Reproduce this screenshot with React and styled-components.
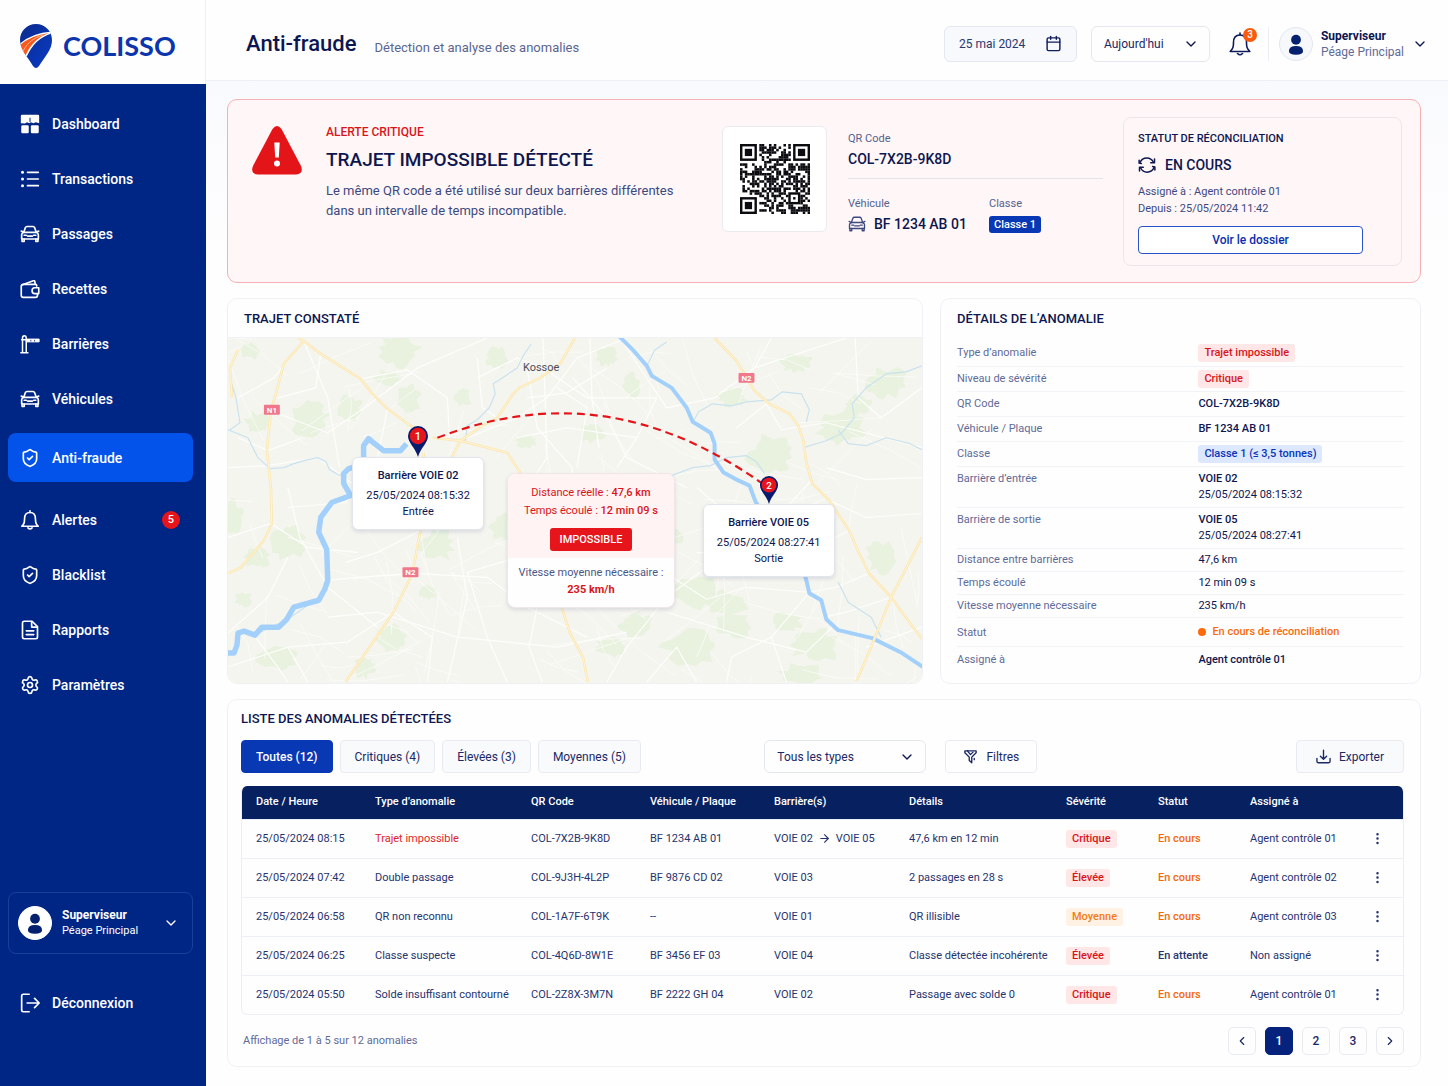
import React, { useState } from "react";
import styled, { createGlobalStyle } from "styled-components";
import {
  ArrowRight,
  Calendar,
  ChevronDown,
  ChevronLeft,
  ChevronRight,
  EllipsisVertical,
  Settings,
  ShieldCheck,
} from "lucide-react";

const GlobalStyle = createGlobalStyle`
  * {
    box-sizing: border-box;
  }
  body {
    margin: 0;
    color: #0d1650;
    background: #fefefe;
    font-family: Roboto, "Liberation Sans", sans-serif;
    font-size: 11px;
    line-height: 16px;
  }
  button, select {
    font-family: inherit;
    color: inherit;
    cursor: pointer;
  }
  h1, h2, h3, p, dl, dd, dt {
    margin: 0;
  }
`;

/* ---------- icons ---------- */

const Svg = ({ size = 20, width = 2, children }) => (
  <svg
    width={size}
    height={size}
    viewBox="0 0 24 24"
    fill="none"
    stroke="currentColor"
    strokeWidth={width}
    strokeLinecap="round"
    strokeLinejoin="round"
    aria-hidden="true"
  >
    {children}
  </svg>
);

const DashboardIcon = () => (
  <Svg>
    <g fill="currentColor" stroke="none">
      <path d="M2.500 1h19Q23 1 23 2.500V11l-4-1-3 1.200-3-1.200-2 1-2.500-1L6 11.500 1 11V2.500Q1 1 2.500 1Z" />
      <rect x="1.500" y="13.500" width="9" height="9.500" rx="1.500" />
      <rect x="13" y="13.500" width="9.500" height="9.500" rx="1.500" />
    </g>
    <path d="M12 5v4" stroke="#002685" strokeWidth="1.200" />
  </Svg>
);

const ListIcon = () => (
  <Svg>
    <path d="M9 4h13M9 12h13M9 20h13" />
    <g fill="currentColor" stroke="none">
      <circle cx="3" cy="4" r="1.800" />
      <circle cx="3" cy="12" r="1.800" />
      <circle cx="3" cy="20" r="1.800" />
    </g>
  </Svg>
);

const CarIcon = ({ size, width }) => (
  <Svg size={size} width={width}>
    <path d="M4.500 10 6.500 4.200Q7 3 8.300 3h7.400q1.300 0 1.800 1.200L19.500 10" />
    <path d="M1.500 8.500 4.500 10h15l3-1.500" />
    <path d="M4.500 10Q2 11 2 13v5h20v-5q0-2-2.500-3" />
    <path d="M2.500 18v3h2.500v-3M19 18v3h2.500v-3" />
    <path d="M5 13.500h2.500M16.500 13.500H19M9 14.500h6" />
  </Svg>
);

const WalletIcon = () => (
  <Svg>
    <path d="M20 8.500V7.500Q20 6.500 18.500 6.500H4q-2.500 0-2.500 2.500v10.500Q1.500 22 4 22h14.500q2.500 0 2.500-2.500V18" />
    <path d="M3 6.800 16 2.200q1.500-.5 1.800 1l.5 3" />
    <path d="M22.500 10.500h-5q-3 0-3 3.500t3 3.500h5Z" />
  </Svg>
);

const BarrierIcon = () => (
  <Svg width={1.8}>
    <path d="M3 22V5q0-3 2.200-3T7.500 5v17M1 22.500h8.500" />
    <path d="M2 7h6" />
    <path d="M8 6h15v3.500H8Z" fill="currentColor" strokeWidth="1" />
    <path d="M13 8.500v-1M17.500 8.500v-1" stroke="#002685" strokeWidth="1" />
  </Svg>
);

const BellIcon = ({ size, width }) => (
  <Svg size={size} width={width}>
    <path d="M12 1v2" />
    <path d="M12 3q6.500 0 6.500 7.500 0 5 1.500 6.800l1.800 2.200H2.200L4 17.300q1.500-1.800 1.500-6.800Q5.500 3 12 3Z" />
    <path d="M9.500 21.500q2.500 2.500 5 0" />
  </Svg>
);

const ReportIcon = () => (
  <Svg>
    <path d="M5 1.500h9.500L21 8v12.500q0 2-2 2H5q-2 0-2-2v-17q0-2 2-2Z" />
    <path d="M14 2v6.500h6.500M7.500 13h9M7.500 17.500h9" />
  </Svg>
);

const LogoutIcon = () => (
  <Svg>
    <path d="M11 1.500H4q-2 0-2 2v17q0 2 2 2h7" />
    <path d="M8.500 12H23M17.500 6.500 23 12l-5.500 5.500" />
  </Svg>
);

const SyncIcon = () => (
  <Svg size={18} width={2}>
    <path d="M2.500 9Q5 2.500 12 2.500q5.500 0 8.500 5.500" />
    <path d="M21.500 15Q19 21.500 12 21.500q-5.500 0-8.500-5.500" />
    <path d="M22 4v5h-5M2 20v-5h5" />
    <path d="M1.500 5.500v4l3 .5M22.500 18.500v-4l-3-.5" />
  </Svg>
);

const FunnelIcon = () => (
  <Svg size={15} width={2.2}>
    <path d="M3 3h18v3l-7 7v9l-4-3.500V13L3 6Z" />
    <path d="m7 3 5 6 4-4M18 15v2" />
  </Svg>
);

const ExportIcon = () => (
  <Svg size={15} width={2.2}>
    <path d="M1.500 15v4.500q0 2.500 2.500 2.500h16q2.500 0 2.500-2.500V15" />
    <path d="M12 2v14M7 11.500l5 5 5-5" />
  </Svg>
);

const PersonIcon = ({ size = 34 }) => (
  <svg width={size} height={size} viewBox="0 0 34 34" fill="currentColor" aria-hidden="true">
    <circle cx="17" cy="12.500" r="5.200" />
    <path d="M9.500 24.500q0-5.500 7.500-5.500t7.500 5.500q0 4-7.500 4t-7.500-4Z" />
  </svg>
);

const WarningIcon = () => (
  <svg width="50" height="49" viewBox="0 0 50 49" aria-hidden="true">
    <path
      d="M20.500 3Q25-3 29.500 3L49 40q3 8-5 8.500H6q-8-.5-5-8.500Z"
      fill="#e31519"
    />
    <path d="M22.300 16.500h5.400l-.9 15h-3.600Z" fill="#fff" />
    <circle cx="25" cy="37.500" r="3" fill="#fff" />
  </svg>
);

const LogoMark = () => (
  <svg width="32" height="45" viewBox="0 0 32 45" aria-hidden="true">
    <defs>
      <linearGradient id="pin" x1="0" y1="0" x2="1" y2="1">
        <stop offset="0" stopColor="#0a2a8c" />
        <stop offset="1" stopColor="#0a3cc8" />
      </linearGradient>
      <clipPath id="pinShape">
        <path d="M16 0C25 0 32 7 32 16c0 10-7 16-13 26q-3 4-6 0C8 33 0 26 0 16 0 7 7 0 16 0Z" />
      </clipPath>
    </defs>
    <g clipPath="url(#pinShape)">
      <rect width="32" height="45" fill="url(#pin)" />
      <path d="M-1 20.500Q11 9 32 7.500v2Q15 14 6.500 33L-1 26Z" fill="#fff" />
      <path d="M-1 22Q10 11.500 29 9 13 14.500 5.500 31.500L-1 26Z" fill="#fb5a1c" />
      <path d="M3 27Q9 15 23 11" stroke="#ffd9c8" strokeWidth=".7" fill="none" />
    </g>
  </svg>
);

/* ---------- shell ---------- */

const Shell = styled.div`
  display: flex;
  min-height: 100vh;
`;

const Sidebar = styled.aside`
  display: flex;
  flex-direction: column;
  flex: 0 0 206px;
  padding-bottom: 60px;
  color: #fff;
  background: #002685;
`;

const Logo = styled.a`
  display: flex;
  align-items: center;
  gap: 11px;
  height: 84px;
  padding: 8px 0 0 20px;
  background: #fefefe;
  border-right: 1px solid #eef0f4;
  color: #0c35ad;
  font-family: Lato, "Liberation Sans", sans-serif;
  font-size: 27px;
  font-weight: 700;
  line-height: 32px;
  text-decoration: none;
`;

const Nav = styled.nav`
  display: flex;
  flex-direction: column;
  gap: 6px;
  padding: 15px 13px 0 8px;
`;

const NavLink = styled.a`
  display: flex;
  align-items: center;
  gap: 12px;
  height: 49px;
  padding: 0 13px 0 12px;
  margin: ${(p) => (p.$active ? "4px 0 7px" : "0")};
  border-radius: 8px;
  background: ${(p) => (p.$active ? "#0353ea" : "transparent")};
  color: #fff;
  font-size: 14px;
  font-weight: 500;
  text-decoration: none;
`;

const NavBadge = styled.span`
  width: 18px;
  height: 18px;
  margin-left: auto;
  border-radius: 50%;
  background: #e6151b;
  font-size: 11px;
  line-height: 18px;
  text-align: center;
`;

const SidebarFoot = styled.div`
  display: flex;
  flex-direction: column;
  gap: 24px;
  margin-top: auto;
  padding: 24px 13px 0 8px;
`;

const ProfileButton = styled.button`
  display: flex;
  align-items: center;
  gap: 10px;
  height: 62px;
  padding: 0 13px 0 9px;
  border: 1px solid #1a409a;
  border-radius: 8px;
  background: transparent;
  color: #fff;
  text-align: left;
  svg:last-child {
    margin-left: auto;
  }
`;

const Avatar = styled.span`
  display: flex;
  flex-shrink: 0;
  align-items: center;
  justify-content: center;
  width: 34px;
  height: 34px;
  border: 1px solid ${(p) => (p.$light ? "#e3e7f0" : "#fff")};
  border-radius: 50%;
  background: ${(p) => (p.$light ? "#f6f8fc" : "#fff")};
  color: #05206f;
`;

const UserText = styled.span`
  display: flex;
  flex-direction: column;
  font-size: ${(p) => (p.$large ? "12px" : "11px")};
  line-height: 16px;
  color: ${(p) => (p.$large ? "#5f6b99" : "#fff")};
  strong {
    color: ${(p) => (p.$large ? "#0d1650" : "#fff")};
    font-size: 12px;
    font-weight: 700;
  }
`;

const Page = styled.div`
  display: flex;
  flex: 1;
  flex-direction: column;
  min-width: 0;
`;

const Header = styled.header`
  display: flex;
  align-items: center;
  height: 81px;
  padding: 7px 20px 0 40px;
  border-bottom: 1px solid #eceff5;
`;

const PageTitle = styled.h1`
  font-size: 22px;
  font-weight: 500;
  line-height: 28px;
`;

const PageSubtitle = styled.p`
  margin-left: 18px;
  padding-top: 8px;
  color: #5a668f;
  font-size: 13px;
`;

const HeaderTools = styled.div`
  display: flex;
  align-items: center;
  gap: 14px;
  margin-left: auto;
`;

const DateButton = styled.button`
  display: flex;
  align-items: center;
  justify-content: space-between;
  width: 133px;
  height: 36px;
  padding: 0 14px;
  border: 1px solid #e3e7f0;
  border-radius: 6px;
  background: #f7f9fc;
  color: #2b3770;
  font-size: 12px;
  svg {
    color: #101c5c;
  }
`;

const SelectBox = styled.div`
  position: relative;
  width: ${(p) => p.$width};
  svg {
    position: absolute;
    top: 50%;
    right: 11px;
    transform: translateY(-50%);
    pointer-events: none;
  }
`;

const Select = styled.select`
  width: 100%;
  height: ${(p) => p.$height};
  padding: 0 12px;
  border: 1px solid #e3e7f0;
  border-radius: 6px;
  background: #fefefe;
  color: #1c2865;
  font-size: 12px;
  appearance: none;
`;

const BellButton = styled.button`
  position: relative;
  display: flex;
  margin: 0 2px 0 4px;
  padding: 0;
  border: 0;
  background: none;
  color: #101c5c;
`;

const BellBadge = styled.span`
  position: absolute;
  top: -4px;
  right: -5px;
  width: 14px;
  height: 14px;
  border-radius: 50%;
  background: #fb5a0c;
  color: #fff;
  font-size: 10px;
  font-weight: 500;
  line-height: 14px;
  text-align: center;
`;

const UserButton = styled.button`
  display: flex;
  align-items: center;
  gap: 8px;
  padding: 0 0 0 10px;
  border: 0;
  border-left: 1px solid #eceff5;
  background: none;
  text-align: left;
`;

const Main = styled.main`
  display: flex;
  flex: 1;
  flex-direction: column;
  gap: 15px;
  padding: 18px 27px 20px 21px;
  background: linear-gradient(#f9fafd, #fefefe 200px);
`;

/* ---------- alert ---------- */

const Alert = styled.section`
  display: flex;
  padding: 17px 18px 16px 24px;
  border: 1px solid #f5b0b2;
  border-radius: 10px;
  background: #fff7f7;
`;

const AlertIcon = styled.div`
  width: 50px;
  margin: 9px 24px 0 0;
`;

const AlertText = styled.div`
  flex: 1;
  padding: 7px 20px 0 0;
  color: #3c4981;
  font-size: 13px;
  line-height: 20px;
  p {
    max-width: 370px;
  }
`;

const AlertTag = styled.div`
  color: #d8151b;
  font-size: 12px;
  font-weight: 500;
  line-height: 16px;
`;

const AlertTitle = styled.h2`
  margin: 8px 0 9px;
  color: #0d1650;
  font-size: 19px;
  font-weight: 500;
  line-height: 24px;
`;

const QrBox = styled.div`
  display: flex;
  align-items: center;
  justify-content: center;
  width: 105px;
  height: 106px;
  margin: 9px 21px 0 0;
  border: 1px solid #ebebef;
  border-radius: 6px;
  background: #fff;
`;

const AlertInfo = styled.div`
  width: 255px;
  margin-right: 20px;
  padding-top: 14px;
`;

const InfoPair = styled.div`
  display: grid;
  grid-template-columns: 141px 1fr;
  padding-top: 17px;
`;

const InfoLabel = styled.div`
  margin-bottom: 3px;
  color: #55618f;
  font-size: 11px;
`;

const InfoValue = styled.div`
  display: flex;
  align-items: center;
  gap: 8px;
  height: 18px;
  font-size: 14px;
  font-weight: 500;
  svg {
    color: #3c4981;
  }
`;

const InfoTop = styled.div`
  padding-bottom: 10px;
  border-bottom: 1px solid #e5e3ea;
`;

const ClassTag = styled.span`
  padding: 0 5px;
  border-radius: 3px;
  background: #0838b4;
  color: #fff;
  font-size: 11px;
  line-height: 17px;
`;

const StatusBox = styled.div`
  width: 279px;
  padding: 13px 38px 11px 14px;
  border: 1px solid #ece6ec;
  border-radius: 8px;
  color: #3c4981;
  line-height: 17px;
`;

const StatusTitle = styled.h3`
  color: #0d1650;
  font-size: 11px;
  font-weight: 500;
  line-height: 16px;
`;

const StatusLine = styled.div`
  display: flex;
  align-items: center;
  gap: 9px;
  margin: 8px 0;
  color: #0d1650;
  font-size: 14px;
  font-weight: 500;
  line-height: 20px;
`;

const OutlineButton = styled.button`
  width: 100%;
  height: 28px;
  margin-top: 9px;
  border: 1px solid #2b50c8;
  border-radius: 4px;
  background: #fff;
  color: #0a2fae;
  font-size: 12px;
  font-weight: 500;
`;

/* ---------- cards ---------- */

const Columns = styled.div`
  display: grid;
  grid-template-columns: minmax(0, 696fr) minmax(0, 481fr);
  gap: 17px;
`;

const Card = styled.section`
  display: flex;
  flex-direction: column;
  overflow: hidden;
  border: 1px solid #eff1f6;
  border-radius: 10px;
  background: #fefefe;
`;

const CardTitle = styled.h2`
  padding: ${(p) => p.$pad || "12px 16px 10px"};
  font-size: 13px;
  font-weight: 500;
  line-height: 16px;
`;

const MapArea = styled.div`
  position: relative;
  aspect-ratio: 694 / 342;
  border-top: 1px solid #eff1f6;
  > svg {
    display: block;
    width: 100%;
    height: 100%;
  }
`;

const Marker = styled.div`
  position: absolute;
  top: ${(p) => p.$y}%;
  left: ${(p) => p.$x}%;
  display: flex;
  flex-direction: column;
  align-items: center;
  transform: translateX(-50%);
`;

const Bubble = styled.div`
  width: 132px;
  padding: 10px 0 9px;
  border: 1px solid #e2e5ee;
  border-radius: 6px;
  background: #fff;
  box-shadow: 0 2px 4px rgba(20, 30, 80, 0.12);
  text-align: center;
  strong {
    display: block;
    margin-bottom: 4px;
    font-weight: 500;
  }
`;

const GapCard = styled.div`
  position: absolute;
  top: 39%;
  left: 52.3%;
  width: 168px;
  overflow: hidden;
  border: 1px solid #f0e6ea;
  border-radius: 8px;
  background: #fefefe;
  box-shadow: 0 2px 4px rgba(20, 30, 80, 0.12);
  text-align: center;
  transform: translateX(-50%);
`;

const GapTop = styled.div`
  padding: 10px 0 7px;
  background: #fff3f3;
  color: #d8151b;
  line-height: 18px;
  strong {
    font-weight: 500;
  }
`;

const GapFlag = styled.span`
  display: inline-block;
  margin-top: 8px;
  padding: 0 10px;
  border-radius: 3px;
  background: #e6151b;
  color: #fff;
  font-weight: 500;
  line-height: 23px;
`;

const GapBottom = styled.div`
  padding: 6px 0 9px;
  color: #4b5788;
  line-height: 17px;
  strong {
    display: block;
    color: #d8151b;
    font-weight: 700;
  }
`;

const Details = styled.dl`
  display: flex;
  flex-direction: column;
  padding: 2px 16px 0;
`;

const DetailRow = styled.div`
  display: grid;
  grid-template-columns: 54fr 46fr;
  align-content: center;
  align-items: baseline;
  min-height: ${(p) => p.$height}px;
  border-bottom: 1px solid #f1f3f7;
  &:last-child {
    border-bottom: 0;
  }
  dt {
    color: #5f6b99;
  }
  dd {
    font-weight: ${(p) => (p.$bold ? 500 : 400)};
  }
  dd span + span {
    display: block;
    font-weight: 400;
  }
`;

const tones = {
  red: { color: "#d8151b", background: "#ffe6e7" },
  orange: { color: "#f47b10", background: "#fff2e4" },
  blue: { color: "#0a35b8", background: "#dde8ff" },
};

const Pill = styled.span`
  display: inline-block;
  padding: 0 6px;
  border-radius: 3px;
  background: ${(p) => tones[p.$tone].background};
  color: ${(p) => tones[p.$tone].color};
  font-weight: 500;
  line-height: 18px;
`;

const Progress = styled.span`
  display: flex;
  align-items: center;
  gap: 6px;
  color: #fb6a0c;
  font-weight: 500;
  &::before {
    content: "";
    width: 8px;
    height: 8px;
    border-radius: 50%;
    background: #fb6a0c;
  }
`;

/* ---------- list ---------- */

const ListCard = styled(Card)`
  padding: 11px 16px 11px 13px;
`;

const Toolbar = styled.div`
  display: flex;
  align-items: center;
  margin: 13px 0;
`;

const Tabs = styled.div`
  display: flex;
  flex: 0 0 45%;
  gap: 7px;
`;

const Button = styled.button`
  display: flex;
  align-items: center;
  justify-content: center;
  gap: 8px;
  height: 33px;
  padding: 0 14px;
  border: 1px solid ${(p) => (p.$active ? "#0838b4" : "#e8ebf2")};
  border-radius: 4px;
  background: ${(p) => (p.$active ? "#0838b4" : p.$plain ? "#fefefe" : "#f8fafc")};
  color: ${(p) => (p.$active ? "#fff" : "#1c2865")};
  font-size: 12px;
  font-weight: ${(p) => (p.$active ? 500 : 400)};
`;

const FilterButton = styled(Button)`
  width: 92px;
  margin-left: 19px;
`;

const ExportButton = styled(Button)`
  width: 108px;
  margin-left: auto;
`;

const TableFrame = styled.div`
  overflow: hidden;
  border: 1px solid #eceff5;
  border-top: 0;
  border-radius: 6px;
`;

const Table = styled.table`
  width: 100%;
  border-collapse: collapse;
  table-layout: fixed;
  th, td {
    padding: 0 0 0 14px;
    text-align: left;
    white-space: nowrap;
  }
  th {
    height: 33px;
    background: #07205f;
    color: #fff;
    font-weight: 500;
  }
  td {
    height: 39px;
    border-top: 1px solid #eceff5;
    color: #26336f;
  }
`;

const Status = styled.span`
  color: ${(p) => (p.$waiting ? "#26336f" : "#f4690c")};
  font-weight: 500;
`;

const Danger = styled.span`
  color: #e0242a;
`;

const Route = styled.span`
  display: flex;
  align-items: center;
  gap: 5px;
`;

const MoreButton = styled.button`
  display: flex;
  padding: 0;
  border: 0;
  background: none;
`;

const ListFoot = styled.div`
  display: flex;
  align-items: center;
  justify-content: space-between;
  margin-top: 12px;
  padding-left: 2px;
  color: #5f6b99;
`;

const Pages = styled.div`
  display: flex;
  gap: 9px;
`;

const PageButton = styled.button`
  display: flex;
  align-items: center;
  justify-content: center;
  width: 28px;
  height: 28px;
  padding: 0;
  border: 1px solid ${(p) => (p.$active ? "#05237c" : "#e8ebf2")};
  border-radius: 5px;
  background: ${(p) => (p.$active ? "#05237c" : "#fefefe")};
  color: ${(p) => (p.$active ? "#fff" : "#1c2865")};
  font-size: 12px;
  font-weight: 500;
`;

/* ---------- data ---------- */

const navItems = [
  { label: "Dashboard", icon: <DashboardIcon /> },
  { label: "Transactions", icon: <ListIcon /> },
  { label: "Passages", icon: <CarIcon /> },
  { label: "Recettes", icon: <WalletIcon /> },
  { label: "Barrières", icon: <BarrierIcon /> },
  { label: "Véhicules", icon: <CarIcon /> },
  { label: "Anti-fraude", icon: <ShieldCheck size={20} />, active: true },
  { label: "Alertes", icon: <BellIcon />, badge: 5 },
  { label: "Blacklist", icon: <ShieldCheck size={20} /> },
  { label: "Rapports", icon: <ReportIcon /> },
  { label: "Paramètres", icon: <Settings size={20} /> },
];

const details = [
  { label: "Type d’anomalie", value: <Pill $tone="red">Trajet impossible</Pill>, height: 28 },
  { label: "Niveau de sévérité", value: <Pill $tone="red">Critique</Pill>, height: 25 },
  { label: "QR Code", value: "COL-7X2B-9K8D", height: 25, bold: true },
  { label: "Véhicule / Plaque", value: "BF 1234 AB 01", height: 25, bold: true },
  { label: "Classe", value: <Pill $tone="blue">Classe 1 (≤ 3,5 tonnes)</Pill>, height: 25 },
  {
    label: "Barrière d’entrée",
    value: (
      <>
        <span>VOIE 02</span>
        <span>25/05/2024 08:15:32</span>
      </>
    ),
    height: 41,
    bold: true,
  },
  {
    label: "Barrière de sortie",
    value: (
      <>
        <span>VOIE 05</span>
        <span>25/05/2024 08:27:41</span>
      </>
    ),
    height: 41,
    bold: true,
  },
  { label: "Distance entre barrières", value: "47,6 km", height: 23 },
  { label: "Temps écoulé", value: "12 min 09 s", height: 23 },
  { label: "Vitesse moyenne nécessaire", value: "235 km/h", height: 23 },
  { label: "Statut", value: <Progress>En cours de réconciliation</Progress>, height: 29 },
  { label: "Assigné à", value: "Agent contrôle 01", height: 26, bold: true },
];

const columns = [
  { label: "Date / Heure", width: 119 },
  { label: "Type d’anomalie", width: 156 },
  { label: "QR Code", width: 119 },
  { label: "Véhicule / Plaque", width: 124 },
  { label: "Barrière(s)", width: 135 },
  { label: "Détails", width: 157 },
  { label: "Sévérité", width: 92 },
  { label: "Statut", width: 92 },
  { label: "Assigné à", width: 120 },
  { label: "", width: 47 },
];

const rows = [
  ["25/05/2024 08:15", "Trajet impossible", "COL-7X2B-9K8D", "BF 1234 AB 01", ["VOIE 02", "VOIE 05"], "47,6 km en 12 min", "Critique", "En cours", "Agent contrôle 01"],
  ["25/05/2024 07:42", "Double passage", "COL-9J3H-4L2P", "BF 9876 CD 02", ["VOIE 03"], "2 passages en 28 s", "Élevée", "En cours", "Agent contrôle 02"],
  ["25/05/2024 06:58", "QR non reconnu", "COL-1A7F-6T9K", "--", ["VOIE 01"], "QR illisible", "Moyenne", "En cours", "Agent contrôle 03"],
  ["25/05/2024 06:25", "Classe suspecte", "COL-4Q6D-8W1E", "BF 3456 EF 03", ["VOIE 04"], "Classe détectée incohérente", "Élevée", "En attente", "Non assigné"],
  ["25/05/2024 05:50", "Solde insuffisant contourné", "COL-2Z8X-3M7N", "BF 2222 GH 04", ["VOIE 02"], "Passage avec solde 0", "Critique", "En cours", "Agent contrôle 01"],
];

const filters = ["Toutes (12)", "Critiques (4)", "Élevées (3)", "Moyennes (5)"];

/* ---------- drawings ---------- */

function randomFrom(seed) {
  let value = seed;
  return () => {
    value = (value * 16807) % 2147483647;
    return value / 2147483647;
  };
}

const QR_SIZE = 29;

function qrModules() {
  const random = randomFrom(7291);
  const corners = [[0, 0], [22, 0], [0, 22]];
  const cells = [];
  for (let y = 0; y < QR_SIZE; y++) {
    for (let x = 0; x < QR_SIZE; x++) {
      const dark = random() > 0.45;
      const inCorner = corners.some(
        ([cx, cy]) => x >= cx - 1 && x <= cx + 7 && y >= cy - 1 && y <= cy + 7
      );
      const inAlign = x >= 20 && x <= 24 && y >= 20 && y <= 24;
      if (dark && !inCorner && !inAlign) {
        cells.push([x, y]);
      }
    }
  }
  return cells;
}

const QrCode = () => (
  <svg width="70" height="70" viewBox="0 0 29 29" role="img" aria-label="QR Code" fill="#0b0b10">
    {qrModules().map(([x, y]) => (
      <rect key={`${x}-${y}`} x={x} y={y} width="1.050" height="1.050" />
    ))}
    {[[0, 0], [22, 0], [0, 22]].map(([x, y]) => (
      <g key={`${x}-${y}`}>
        <rect x={x + 0.5} y={y + 0.5} width="6" height="6" fill="none" stroke="#0b0b10" />
        <rect x={x + 2} y={y + 2} width="3" height="3" />
      </g>
    ))}
    <rect x="20.500" y="20.500" width="4" height="4" fill="none" stroke="#0b0b10" />
    <rect x="22" y="22" width="1" height="1" />
  </svg>
);

function blob([cx, cy, rx, ry], seed) {
  const random = randomFrom(seed * 977 + 13);
  const points = [];
  for (let i = 0; i < 22; i++) {
    const angle = (i / 22) * Math.PI * 2;
    const r = 0.6 + random() * 0.5;
    points.push(
      `${Math.round(cx + Math.cos(angle) * rx * r)},${Math.round(cy + Math.sin(angle) * ry * r)}`
    );
  }
  return points.join(" ");
}

// short local streets, scattered and slightly bent
function streets(count) {
  const random = randomFrom(4417);
  const lines = [];
  for (let i = 0; i < count; i++) {
    const x = Math.round(random() * 696);
    const y = Math.round(random() * 346);
    const angle = random() * Math.PI * 2;
    const length = 14 + random() * 30;
    const dx = Math.round(Math.cos(angle) * length);
    const dy = Math.round(Math.sin(angle) * length);
    const bend = Math.round(random() * 16 - 8);
    lines.push(`M${x} ${y}l${dx} ${dy}l${dx + bend} ${dy - bend}`);
  }
  return lines.join("");
}

const woods = [
  [172, 14, 24, 18], [160, 40, 16, 9], [82, 82, 22, 20], [122, 70, 13, 14], [180, 62, 14, 16],
  [30, 85, 14, 12], [5, 180, 12, 20], [60, 205, 20, 20], [30, 220, 14, 12], [208, 208, 20, 18],
  [165, 302, 17, 16], [137, 330, 12, 12], [50, 322, 22, 12], [200, 255, 10, 8], [275, 190, 14, 14],
  [380, 18, 12, 12], [405, 48, 10, 14], [365, 95, 14, 10], [545, 115, 26, 22], [505, 60, 16, 10],
  [570, 25, 18, 10], [615, 90, 26, 18], [660, 45, 24, 18], [632, 68, 18, 12], [655, 220, 18, 18],
  [470, 255, 26, 18], [500, 265, 24, 12], [465, 310, 32, 20], [508, 288, 20, 14], [590, 308, 26, 18],
  [560, 285, 18, 10], [410, 288, 20, 14], [575, 338, 24, 12], [450, 200, 10, 8], [270, 20, 12, 12],
  [235, 60, 10, 10], [22, 12, 12, 10], [385, 310, 18, 10], [15, 262, 10, 8], [300, 104, 12, 7],
];

const majorRoads = [
  "M76 3 56 26 48 56 43 73 39 113 43 150 44 186 36 203 13 230 0 236",
  "M70 0 76 3 93 16 133 41 145 56 160 71 183 88 193 92",
  "M196 115 200 160 193 193 185 236 166 275 140 313 118 345",
  "M348 0 333 26 313 40 292 50 286 56 270 80 252 90 233 103 222 125 205 165",
  "M233 103 280 115 293 135 305 155",
  "M488 0 510 23 528 53 543 66 563 76 572 88 577 103 580 125 586 146 603 163 623 193 633 216 643 236 665 260 696 302",
  "M696 200 678 235 665 260 645 310 630 345",
  "M333 265 343 296 356 320 361 345",
  "M205 100 233 103 245 95",
  "M4 60 2 30 10 12",
];

const minorRoads = [
  "M0 130 40 128 90 120 130 150", "M76 3 100 60 112 130", "M43 73 100 95 137 70 190 30 260 0",
  "M93 16 88 50 50 60", "M133 41 180 32 220 60 222 100", "M160 71 150 120 118 165 60 170",
  "M316 0 318 60 320 120 300 150", "M233 103 290 80 320 60 350 20 400 0", "M346 40 380 80 400 120 460 150",
  "M363 0 365 60 372 110", "M430 60 410 100 390 130", "M393 0 440 70 488 60 528 30 620 0",
  "M528 30 545 0", "M510 90 540 66 555 92 600 85 696 110", "M629 0 632 60 655 80 696 50",
  "M600 130 640 142 696 140", "M585 143 560 170 540 200", "M603 163 640 180 696 176",
  "M623 193 590 210 540 220 470 215", "M470 150 500 175 480 230 440 260 400 310 380 345",
  "M430 230 480 262 520 250 583 255", "M583 255 545 300 560 345", "M606 290 580 315 520 300 440 275",
  "M643 236 610 250 583 255", "M665 260 620 275 598 280", "M0 200 43 186 80 210 130 215",
  "M60 150 72 200 100 250 150 290", "M0 296 40 260 60 220", "M100 243 130 240 185 236 260 240 300 270 360 300",
  "M100 280 150 275 230 300 330 310 400 295", "M166 275 205 300 200 345", "M230 200 240 260 220 345",
  "M310 270 302 310 315 345", "M0 330 60 310 120 305 166 275", "M60 310 80 345", "M26 298 50 330 60 345",
  "M280 345 260 300 240 235 290 220", "M10 100 40 113 75 100", "M10 60 46 40 76 3",
  "M193 193 150 215 118 225", "M420 345 450 310 470 345", "M640 310 696 290", "M500 345 505 320 545 300",
  "M250 40 290 20 316 30 360 60 430 60", "M250 20 255 70 270 80", "M300 30 310 90 345 130 345 140",
  "M330 50 360 70 350 130", "M290 100 340 90 410 100", "M380 30 340 55 300 60",
];

const streams = [
  "M0 92 20 100 30 120 42 131 56 130 66 126 80 122 90 120 98 124 102 132 112 138 120 132",
  "M2 40 8 60 12 85 2 92",
  "M238 104 240 88 250 82 262 70 268 56 266 46 278 38 290 30 296 18 304 6",
  "M420 28 428 12 440 4",
  "M466 85 472 74 486 66 505 68 520 64 545 62 556 54 575 56 583 72 580 84",
  "M577 110 600 103 615 96 628 80 626 66 640 50 660 36 680 34 696 28",
  "M696 112 684 106 660 100 640 108 622 106 612 92",
  "M440 140 450 136 466 130 484 128 500 120 520 118 530 124 538 136",
  "M612 245 622 265 645 280 655 300",
  "M26 298 60 282 80 268",
];

const leftRiver =
  "M-4 316H6L9 308 10 296 16 294 27 298 34 290 51 290 59 282 66 270 91 263 97 252 100 243 99 212 91 195 93 180 104 165 123 158 116 146 116 136 121 131 136 127V108L141 101 147 106 156 113 173 113 179 106";
const rightRiver =
  "M391-3 407 13 420 28 425 38 445 50 460 70 466 84 484 95 488 106 488 122 497 135 508 141 523 148 529 164 545 190 573 220 580 243 583 256 595 263 600 282 612 293 646 301 676 316 700 332";

const shields = [
  { name: "N1", x: 44, y: 72 },
  { name: "N2", x: 183, y: 235 },
  { name: "N2", x: 520, y: 40 },
];

const MapDrawing = () => (
  <svg viewBox="0 0 696 346" preserveAspectRatio="xMidYMid slice" aria-hidden="true">
    <rect width="696" height="346" fill="#f5f5f0" />
    <g fill="#e3f1d8" opacity="0.7">
      {woods.map((wood, i) => (
        <polygon key={i} points={blob(wood, i + 1)} />
      ))}
    </g>
    <path d={streets(150)} fill="none" stroke="#fbfbf8" strokeWidth=".8" />
    <g fill="none" stroke="#fdfdfb" strokeWidth="1.200" strokeLinejoin="round">
      {minorRoads.map((d) => (
        <path key={d} d={d} />
      ))}
    </g>
    <g fill="none" stroke="#c9e2ee" strokeWidth="1.200" strokeLinejoin="round">
      {streams.map((d) => (
        <path key={d} d={d} />
      ))}
    </g>
    <g fill="none" stroke="#a3d0fb" strokeLinejoin="round">
      <path d={leftRiver} strokeWidth="5.500" />
      <path d={rightRiver} strokeWidth="4" />
    </g>
    <g fill="none" stroke="#fbe6b0" strokeWidth="2.600" strokeLinejoin="round">
      {majorRoads.map((d) => (
        <path key={d} d={d} />
      ))}
    </g>
    <g fill="none" stroke="#fff5da" strokeWidth="1" strokeLinejoin="round">
      {majorRoads.map((d) => (
        <path key={d} d={d} />
      ))}
    </g>
    {shields.map((s) => (
      <g key={`${s.x}-${s.y}`}>
        <rect x={s.x - 8} y={s.y - 5} width="16" height="10" rx="1" fill="#f0788a" />
        <text x={s.x} y={s.y + 3} fill="#fff" fontSize="8" fontWeight="700" textAnchor="middle">
          {s.name}
        </text>
      </g>
    ))}
    <text x="314" y="33" fill="#4a4d5c" fontSize="11" textAnchor="middle">
      Kossoe
    </text>
    <path
      d="M210 100C320 58 425 68 536 146"
      fill="none"
      stroke="#e31519"
      strokeWidth="2.200"
      strokeDasharray="8 5"
    />
  </svg>
);

const Pin = ({ number, height }) => (
  <svg width="20" height={height} viewBox="0 0 20 31" aria-hidden="true">
    <path d="M10 0a10 10 0 0 1 10 10c0 7-7 11-10 21C7 21 0 17 0 10A10 10 0 0 1 10 0Z" fill="#0a1c6e" />
    <circle cx="10" cy="10" r="8.200" fill="#e6151b" />
    <text x="10" y="14" fill="#fff" fontSize="11" fontWeight="500" textAnchor="middle">
      {number}
    </text>
  </svg>
);

/* ---------- app ---------- */

function SeverityPill({ level }) {
  return <Pill $tone={level === "Moyenne" ? "orange" : "red"}>{level}</Pill>;
}

function Navigation() {
  return (
    <Sidebar>
      <Logo href="#">
        <LogoMark />
        COLISSO
      </Logo>
      <Nav>
        {navItems.map((item) => (
          <NavLink key={item.label} href="#" $active={item.active}>
            {item.icon}
            {item.label}
            {item.badge && <NavBadge>{item.badge}</NavBadge>}
          </NavLink>
        ))}
      </Nav>
      <SidebarFoot>
        <ProfileButton>
          <Avatar>
            <PersonIcon />
          </Avatar>
          <UserText>
            <strong>Superviseur</strong>
            Péage Principal
          </UserText>
          <ChevronDown size={16} />
        </ProfileButton>
        <NavLink href="#">
          <LogoutIcon />
          Déconnexion
        </NavLink>
      </SidebarFoot>
    </Sidebar>
  );
}

function TopBar() {
  return (
    <Header>
      <PageTitle>Anti-fraude</PageTitle>
      <PageSubtitle>Détection et analyse des anomalies</PageSubtitle>
      <HeaderTools>
        <DateButton>
          25 mai 2024
          <Calendar size={17} />
        </DateButton>
        <SelectBox $width="119px">
          <Select $height="36px" aria-label="Période">
            <option>Aujourd'hui</option>
          </Select>
          <ChevronDown size={16} />
        </SelectBox>
        <BellButton aria-label="Notifications">
          <BellIcon size={24} width={1.6} />
          <BellBadge>3</BellBadge>
        </BellButton>
        <UserButton>
          <Avatar $light>
            <PersonIcon />
          </Avatar>
          <UserText $large>
            <strong>Superviseur</strong>
            Péage Principal
          </UserText>
          <ChevronDown size={16} />
        </UserButton>
      </HeaderTools>
    </Header>
  );
}

function CriticalAlert() {
  return (
    <Alert>
      <AlertIcon>
        <WarningIcon />
      </AlertIcon>
      <AlertText>
        <AlertTag>ALERTE CRITIQUE</AlertTag>
        <AlertTitle>TRAJET IMPOSSIBLE DÉTECTÉ</AlertTitle>
        <p>
          Le même QR code a été utilisé sur deux barrières différentes dans un intervalle de
          temps incompatible.
        </p>
      </AlertText>
      <QrBox>
        <QrCode />
      </QrBox>
      <AlertInfo>
        <InfoTop>
          <InfoLabel>QR Code</InfoLabel>
          <InfoValue>COL-7X2B-9K8D</InfoValue>
        </InfoTop>
        <InfoPair>
          <div>
            <InfoLabel>Véhicule</InfoLabel>
            <InfoValue>
              <CarIcon size={18} width={1.8} />
              BF 1234 AB 01
            </InfoValue>
          </div>
          <div>
            <InfoLabel>Classe</InfoLabel>
            <InfoValue>
              <ClassTag>Classe 1</ClassTag>
            </InfoValue>
          </div>
        </InfoPair>
      </AlertInfo>
      <StatusBox>
        <StatusTitle>STATUT DE RÉCONCILIATION</StatusTitle>
        <StatusLine>
          <SyncIcon />
          EN COURS
        </StatusLine>
        <p>Assigné à : Agent contrôle 01</p>
        <p>Depuis : 25/05/2024 11:42</p>
        <OutlineButton>Voir le dossier</OutlineButton>
      </StatusBox>
    </Alert>
  );
}

function RouteMap() {
  return (
    <Card>
      <CardTitle>TRAJET CONSTATÉ</CardTitle>
      <MapArea>
        <MapDrawing />
        <GapCard>
          <GapTop>
            <div>
              Distance réelle : <strong>47,6 km</strong>
            </div>
            <div>
              Temps écoulé : <strong>12 min 09 s</strong>
            </div>
            <GapFlag>IMPOSSIBLE</GapFlag>
          </GapTop>
          <GapBottom>
            Vitesse moyenne nécessaire :<strong>235 km/h</strong>
          </GapBottom>
        </GapCard>
        <Marker $x={27.4} $y={25.6}>
          <Pin number={1} height={31} />
          <Bubble>
            <strong>Barrière VOIE 02</strong>
            25/05/2024 08:15:32
            <br />
            Entrée
          </Bubble>
        </Marker>
        <Marker $x={77.9} $y={40}>
          <Pin number={2} height={28} />
          <Bubble>
            <strong>Barrière VOIE 05</strong>
            25/05/2024 08:27:41
            <br />
            Sortie
          </Bubble>
        </Marker>
      </MapArea>
    </Card>
  );
}

function AnomalyDetails() {
  return (
    <Card>
      <CardTitle>DÉTAILS DE L’ANOMALIE</CardTitle>
      <Details>
        {details.map((row) => (
          <DetailRow key={row.label} $height={row.height} $bold={row.bold}>
            <dt>{row.label}</dt>
            <dd>{row.value}</dd>
          </DetailRow>
        ))}
      </Details>
    </Card>
  );
}

function AnomalyList() {
  const [filter, setFilter] = useState(0);
  const [page, setPage] = useState(1);

  return (
    <ListCard>
      <CardTitle $pad="0">LISTE DES ANOMALIES DÉTECTÉES</CardTitle>
      <Toolbar>
        <Tabs>
          {filters.map((label, i) => (
            <Button key={label} $active={i === filter} onClick={() => setFilter(i)}>
              {label}
            </Button>
          ))}
        </Tabs>
        <SelectBox $width="162px">
          <Select $height="33px" aria-label="Type d’anomalie">
            <option>Tous les types</option>
          </Select>
          <ChevronDown size={16} />
        </SelectBox>
        <FilterButton $plain>
          <FunnelIcon />
          Filtres
        </FilterButton>
        <ExportButton>
          <ExportIcon />
          Exporter
        </ExportButton>
      </Toolbar>
      <TableFrame>
        <Table>
          <colgroup>
            {columns.map((column, i) => (
              <col key={i} width={column.width} />
            ))}
          </colgroup>
          <thead>
            <tr>
              {columns.map((column, i) => (
                <th key={i}>{column.label}</th>
              ))}
            </tr>
          </thead>
          <tbody>
            {rows.map(([date, type, code, plate, gates, info, level, status, agent], i) => (
              <tr key={date}>
                <td>{date}</td>
                <td>{i === 0 ? <Danger>{type}</Danger> : type}</td>
                <td>{code}</td>
                <td>{plate}</td>
                <td>
                  <Route>
                    {gates[0]}
                    {gates[1] && <ArrowRight size={13} />}
                    {gates[1]}
                  </Route>
                </td>
                <td>{info}</td>
                <td>
                  <SeverityPill level={level} />
                </td>
                <td>
                  <Status $waiting={status === "En attente"}>{status}</Status>
                </td>
                <td>{agent}</td>
                <td>
                  <MoreButton aria-label="Actions">
                    <EllipsisVertical size={15} />
                  </MoreButton>
                </td>
              </tr>
            ))}
          </tbody>
        </Table>
      </TableFrame>
      <ListFoot>
        Affichage de 1 à 5 sur 12 anomalies
        <Pages>
          <PageButton aria-label="Page précédente">
            <ChevronLeft size={14} />
          </PageButton>
          {[1, 2, 3].map((n) => (
            <PageButton key={n} $active={n === page} onClick={() => setPage(n)}>
              {n}
            </PageButton>
          ))}
          <PageButton aria-label="Page suivante">
            <ChevronRight size={14} />
          </PageButton>
        </Pages>
      </ListFoot>
    </ListCard>
  );
}

export default function App() {
  return (
    <Shell>
      <GlobalStyle />
      <Navigation />
      <Page>
        <TopBar />
        <Main>
          <CriticalAlert />
          <Columns>
            <RouteMap />
            <AnomalyDetails />
          </Columns>
          <AnomalyList />
        </Main>
      </Page>
    </Shell>
  );
}
